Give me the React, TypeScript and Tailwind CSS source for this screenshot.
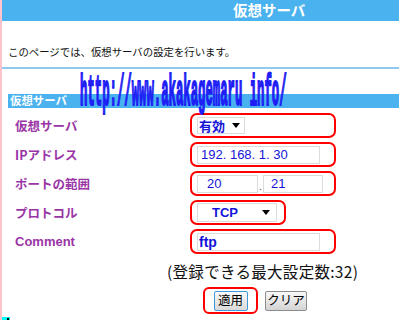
import React from "react";

const jp = { fontFamily: '"MS UI Gothic","Noto Sans CJK JP","Noto Sans",sans-serif' };

function Box({ w, children }: { w: string; children: React.ReactNode }) {
  return (
    <div className={`${w} h-[25px] border-2 border-[#ff0000] rounded-[7px] flex items-center pl-[5px]`}>
      {children}
    </div>
  );
}

function Row({ label, children, latin }: { label: string; children: React.ReactNode; latin?: boolean }) {
  return (
    <div className="flex items-center h-[25px]">
      <div
        className={`w-[188px] pl-[13px] font-bold text-[#9a35a6] leading-[16px] ${latin ? "text-[13px]" : "text-[12.5px]"}`}
        style={latin ? { fontFamily: '"Liberation Sans",Arial,sans-serif' } : jp}
      >
        {label}
      </div>
      {children}
    </div>
  );
}

const Arrow = () => (
  <svg width="8" height="5" viewBox="0 0 8 5" className="block">
    <path d="M0 0 H8 L4 5 Z" fill="#000" />
  </svg>
);

export default function App() {
  const blue = { fontFamily: '"Liberation Sans",Arial,"Noto Sans CJK JP",sans-serif' };
  return (
    <div className="relative w-[399px] h-[320px] bg-white flex overflow-hidden">
      <div className="w-[2px] shrink-0 bg-[#ffc3cc]" />
      <div className="flex-1 flex flex-col">
        <div className="h-[21px] bg-[#4ab2ee] flex items-center pl-[231px]">
          <span className="text-white font-bold text-[14.5px] leading-none" style={jp}>
            仮想サーバ
          </span>
        </div>
        <div className="h-[46px] pl-[6px] pt-[24px] text-[10.4px] leading-[14px] text-[#111]" style={jp}>
          このページでは、仮想サーバの設定を行います。
        </div>
        <div className="h-[2px] bg-[#8ec9f0]" />
        <div className="h-[25px]" />
        <div className="ml-[6px] h-[14px] bg-[#4ab2ee] flex items-center pl-[2px]">
          <span className="text-white font-bold text-[11.4px] leading-none" style={jp}>
            仮想サーバ
          </span>
        </div>
        <div className="mt-[5px] flex flex-col gap-[4px]">
          <Row label="仮想サーバ">
            <Box w="w-[146px]">
              <div className="w-[48px] h-[17px] border border-[#dcdcdc] bg-white flex items-center justify-between pl-[1px] pr-[4px]">
                <span className="text-[13px] font-bold text-[#1414d8] leading-none" style={jp}>
                  有効
                </span>
                <Arrow />
              </div>
            </Box>
          </Row>
          <Row label="IPアドレス">
            <Box w="w-[146px]">
              <div className="w-[123px] h-[18px] border border-[#dcdcdc] bg-white flex items-center pl-[3px]">
                <span className="text-[13px] text-[#1414d8] leading-none" style={blue}>
                  192. 168. 1. 30
                </span>
              </div>
            </Box>
          </Row>
          <Row label="ポートの範囲">
            <Box w="w-[146px]">
              <div className="w-[61px] h-[18px] border border-[#dcdcdc] bg-white flex items-center pl-[9px]">
                <span className="text-[13px] text-[#1414d8] leading-none" style={blue}>
                  20
                </span>
              </div>
              <span className="w-[5px] text-center text-[9px] leading-none self-end mb-[3px] text-[#333]">.</span>
              <div className="w-[60px] h-[18px] border border-[#dcdcdc] bg-white flex items-center pl-[7px]">
                <span className="text-[13px] text-[#1414d8] leading-none" style={blue}>
                  21
                </span>
              </div>
            </Box>
          </Row>
          <Row label="プロトコル">
            <Box w="w-[96px]">
              <div className="w-[80px] h-[19px] border border-[#dcdcdc] bg-white flex items-center justify-between pl-[14px] pr-[6px]">
                <span className="text-[13px] font-bold text-[#1414d8] leading-none" style={blue}>
                  TCP
                </span>
                <Arrow />
              </div>
            </Box>
          </Row>
          <Row label="Comment" latin>
            <Box w="w-[146px]">
              <div className="w-[123px] h-[18px] border border-[#dcdcdc] bg-white flex items-center pl-[1px]">
                <span className="text-[14px] font-bold text-[#1414d8] leading-none" style={blue}>
                  ftp
                </span>
              </div>
            </Box>
          </Row>
        </div>
        <div className="mt-[8px] pl-[165px] text-[15.5px] leading-[18px] text-[#111] tracking-[0.3px]" style={jp}>
          (登録できる最大設定数:32)
        </div>
        <div className="mt-[7px] flex items-center pl-[201px] gap-[7px]">
          <div className="w-[55px] h-[27px] border-2 border-[#ff0000] rounded-[6px] flex items-center justify-center">
            <div className="w-[34px] h-[20px] border border-[#3d9bdc] rounded-[2px] bg-gradient-to-b from-[#fafafa] to-[#d9d9d9] flex items-center justify-center">
              <span className="text-[12.5px] leading-none text-black" style={jp}>適用</span>
            </div>
          </div>
          <div className="w-[42px] h-[20px] border border-[#8c8c8c] rounded-[2px] bg-gradient-to-b from-[#f8f8f8] to-[#d4d4d4] flex items-center justify-center">
            <span className="text-[12.5px] leading-none text-black" style={jp}>クリア</span>
          </div>
        </div>
      </div>
      <div
        className="absolute left-[80px] top-[72px] pointer-events-none text-[12.3px] leading-[12px] font-bold text-[#1e1ef5] origin-top-left [transform:scaleY(3.67)] [-webkit-text-stroke:0.6px_#1e1ef5] whitespace-pre"
        style={{ fontFamily: '"Liberation Mono","DejaVu Sans Mono",monospace' }}
      >
        http://www.akakagemaru info/
      </div>
      <div className="absolute left-[2px] bottom-0 w-[8px] h-[3px] bg-[#00ffff]">
        <div className="ml-[5px] mt-[1px] w-[2px] h-[2px] bg-black" />
      </div>
    </div>
  );
}
